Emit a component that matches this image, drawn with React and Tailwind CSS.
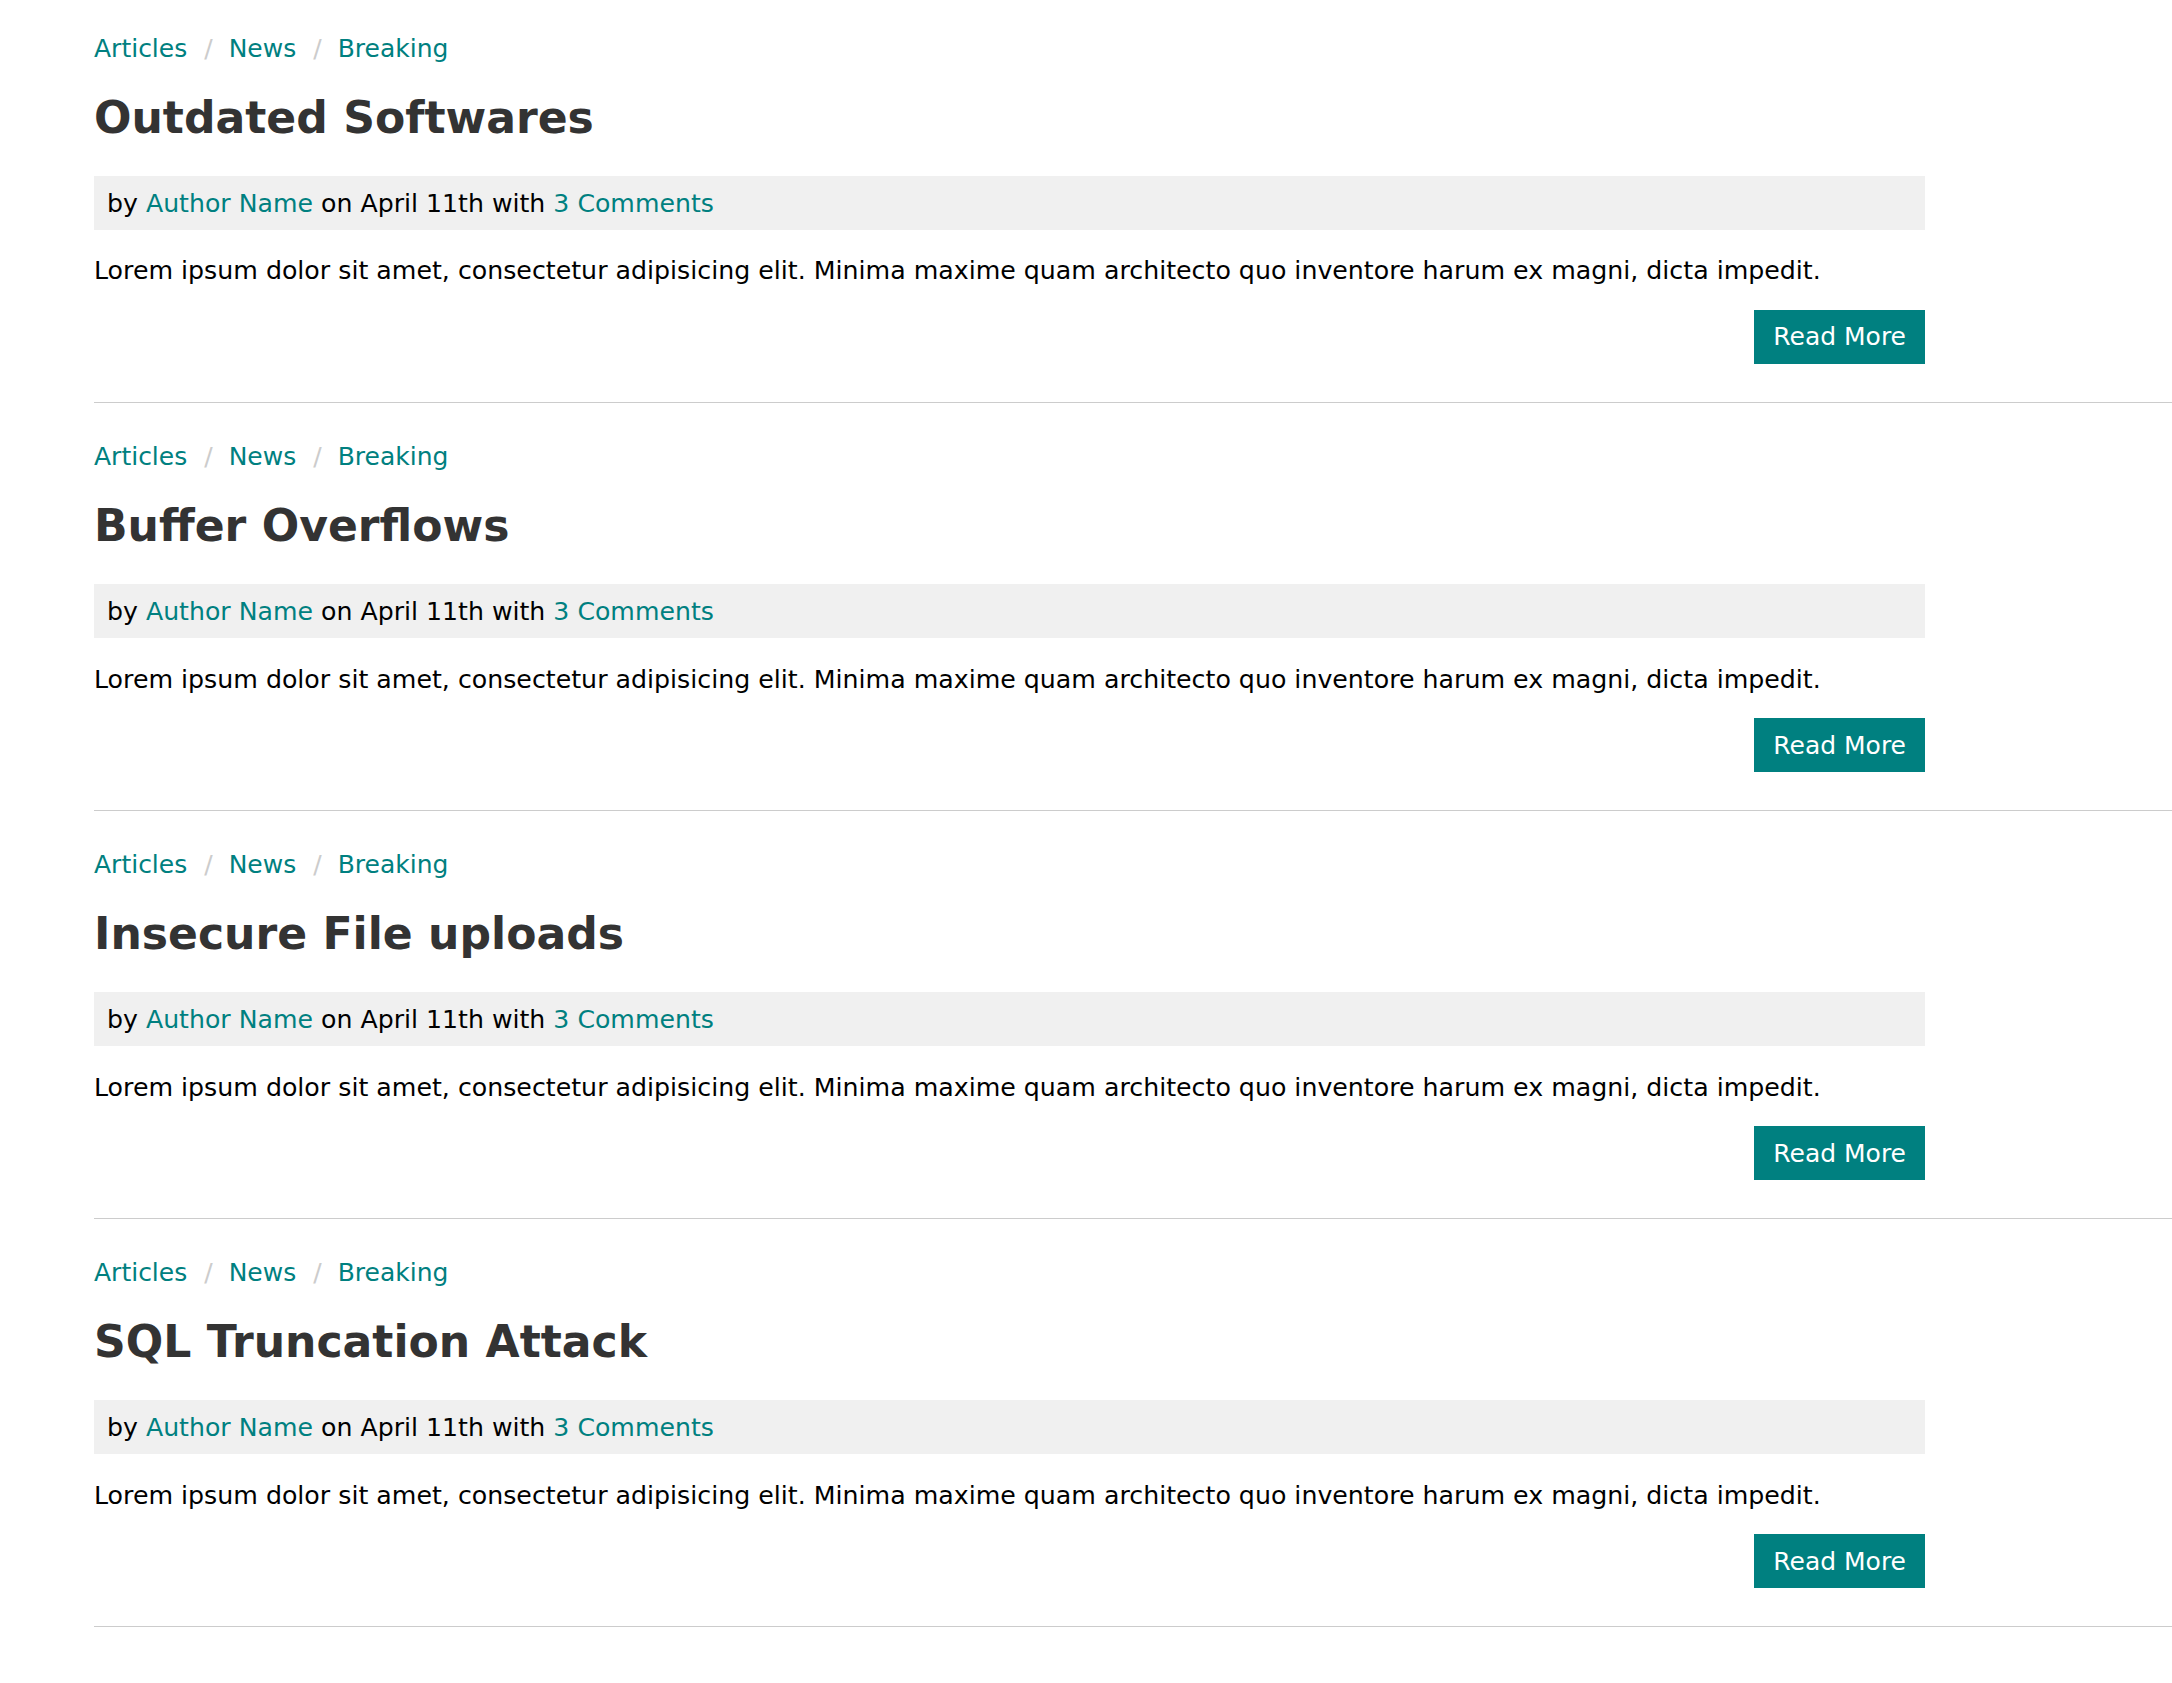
import React from "react";

const posts = [
  "Outdated Softwares",
  "Buffer Overflows",
  "Insecure File uploads",
  "SQL Truncation Attack",
];

function Article({ title, first }) {
  return (
    <article className={first ? "pt-[30.5px]" : "pt-[35.6px]"}>
      <div className="w-[1831px]">
        <nav className="flex text-[25px] leading-[36px] text-[#008080]">
          <a href="#" className="text-[#008080]">Articles</a>
          <span className="pl-[17px] pr-[16px] text-[#cccccc]">/</span>
          <a href="#" className="text-[#008080]">News</a>
          <span className="pl-[17px] pr-[16px] text-[#cccccc]">/</span>
          <a href="#" className="text-[#008080]">Breaking</a>
        </nav>
        <h1 className="mt-[27.6px] text-[44.1px] leading-[48.7px] font-bold text-[#333333]">
          {title}
        </h1>
        <div className="mt-[33.2px] bg-[#f0f0f0] px-[13px] pt-[10px] pb-[8px] text-[25.2px] leading-[36px] text-black">
          by <a href="#" className="text-[#008080]">Author Name</a> on April 11th with{" "}
          <a href="#" className="text-[#008080]">3 Comments</a>
        </div>
        <p className="mt-[23.5px] text-[25.25px] leading-[36px] text-black">
          Lorem ipsum dolor sit amet, consectetur adipisicing elit. Minima maxime quam architecto quo inventore harum ex magni, dicta impedit.
        </p>
        <div className="mt-[20.5px] flex justify-end">
          <a
            href="#"
            className="bg-[#008080] px-[19px] pt-[9.5px] pb-[8.5px] text-[25px] leading-[36px] text-white"
          >
            Read More
          </a>
        </div>
      </div>
      <hr className="mt-[38px] border-0 border-t border-[#cccccc]" />
    </article>
  );
}

export default function App() {
  return (
    <div className="min-h-screen bg-white pl-[94px] font-['DejaVu_Sans',sans-serif]">
      {posts.map((t, i) => (
        <Article key={t} title={t} first={i === 0} />
      ))}
    </div>
  );
}
